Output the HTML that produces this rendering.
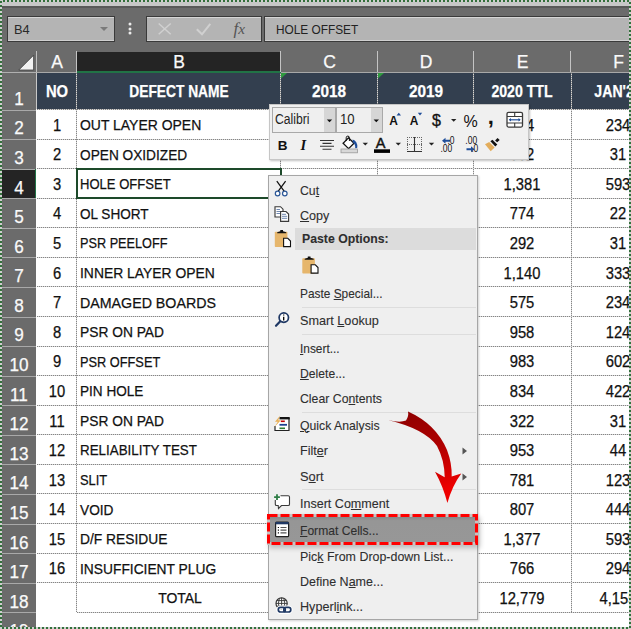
<!DOCTYPE html>
<html><head><meta charset="utf-8"><style>
html,body{margin:0;padding:0;width:631px;height:629px;overflow:hidden;background:#6b6b6b}
body{position:relative;font-family:"Liberation Sans",sans-serif}
.r{position:absolute}
.t{position:absolute;white-space:nowrap;-webkit-text-stroke:0.25px currentColor}
u{text-decoration:underline;text-underline-offset:1px;text-decoration-thickness:1px}
</style></head><body>
<div class="r" style="left:0px;top:0px;width:631px;height:629px;background:#6b6b6b"></div>
<div class="r" style="left:2px;top:2px;width:627px;height:4px;background:#c7c7c7"></div>
<div class="r" style="left:2px;top:6px;width:627px;height:2px;background:#595959"></div>
<div class="r" style="left:7px;top:16px;width:108px;height:26px;background:#b4b4b4;border:1px solid #3a3a3a;box-sizing:border-box;box-shadow:inset 0 1px 0 #d6d6d6, inset 0 -1px 0 #d0d0d0"></div>
<div class="r" style="left:146px;top:16px;width:116px;height:26px;background:#b4b4b4;border:1px solid #3a3a3a;box-sizing:border-box;box-shadow:inset 0 1px 0 #d6d6d6, inset 0 -1px 0 #d0d0d0"></div>
<div class="r" style="left:264px;top:16px;width:370px;height:26px;background:#b4b4b4;border:1px solid #3a3a3a;box-sizing:border-box;box-shadow:inset 0 1px 0 #d6d6d6, inset 0 -1px 0 #d0d0d0"></div>
<div class="t" style="left:14px;top:22.57px;font-size:13.5px;line-height:13.5px;font-weight:400;color:#2a2a2a;transform:scaleX(0.95);transform-origin:left;-webkit-text-stroke:0">B4</div>
<svg class="r" style="left:100px;top:27px" width="8" height="5"><path d="M0 0H8L4 4Z" fill="#7a7a7a"/></svg>
<svg class="r" style="left:127px;top:21.2px" width="6" height="6"><circle cx="3" cy="3" r="1.5" fill="#ececec"/></svg>
<svg class="r" style="left:127px;top:25.7px" width="6" height="6"><circle cx="3" cy="3" r="1.5" fill="#ececec"/></svg>
<svg class="r" style="left:127px;top:30.200000000000003px" width="6" height="6"><circle cx="3" cy="3" r="1.5" fill="#ececec"/></svg>
<svg class="r" style="left:155px;top:20px" width="100" height="20"><path d="M3.7 3.5L15.7 14.3M15.7 3.5L3.7 14.3" stroke="#d0d0d0" stroke-width="1.5" fill="none"/><path d="M41.8 9.2L47 14.3L55.3 3.8" stroke="#d0d0d0" stroke-width="2" fill="none"/></svg>
<div class="t" style="left:233.5px;top:20.11px;font-size:17px;line-height:17px;font-weight:400;color:#555;transform:scaleX(1.0);transform-origin:left;font-family:Liberation Serif,serif;-webkit-text-stroke:0"><i>f</i><i style="font-size:0.9em">x</i></div>
<div class="t" style="left:276.3px;top:22.50px;font-size:13.7px;line-height:13.7px;font-weight:400;color:#222;transform:scaleX(0.865);transform-origin:left;-webkit-text-stroke:0">HOLE OFFSET</div>
<div class="r" style="left:2px;top:51px;width:34px;height:21px;background:#6b6b6b"></div>
<svg class="r" style="left:17px;top:53px" width="18" height="19"><path d="M1.8 17L16.6 2.2V17Z" fill="#f2f2f2" stroke="#3d3d3d" stroke-width="0.8"/></svg>
<div class="r" style="left:36px;top:51px;width:1px;height:22px;background:#c0c0c0"></div>
<div class="r" style="left:2px;top:72px;width:35px;height:1px;background:#b0b0b0"></div>
<div class="r" style="left:37px;top:72px;width:40px;height:1px;background:#a8a8a8"></div>
<div class="r" style="left:76px;top:51px;width:1px;height:21px;background:#c4c4c4"></div>
<div class="t" style="left:57.0px;top:54.19px;font-size:17.5px;line-height:17.5px;font-weight:400;color:#fafafa;transform:translateX(-50%) scaleX(1.0);transform-origin:center;">A</div>
<div class="r" style="left:77px;top:52px;width:204px;height:19px;background:#242424"></div>
<div class="r" style="left:77px;top:71px;width:204px;height:2px;background:#217346"></div>
<div class="r" style="left:280px;top:51px;width:1px;height:21px;background:#c4c4c4"></div>
<div class="t" style="left:179.0px;top:54.19px;font-size:17.5px;line-height:17.5px;font-weight:400;color:#fafafa;transform:translateX(-50%) scaleX(1.0);transform-origin:center;">B</div>
<div class="r" style="left:281px;top:72px;width:97px;height:1px;background:#a8a8a8"></div>
<div class="r" style="left:377px;top:51px;width:1px;height:21px;background:#c4c4c4"></div>
<div class="t" style="left:329.5px;top:54.19px;font-size:17.5px;line-height:17.5px;font-weight:400;color:#fafafa;transform:translateX(-50%) scaleX(1.0);transform-origin:center;">C</div>
<div class="r" style="left:378px;top:72px;width:96px;height:1px;background:#a8a8a8"></div>
<div class="r" style="left:473px;top:51px;width:1px;height:21px;background:#c4c4c4"></div>
<div class="t" style="left:426.0px;top:54.19px;font-size:17.5px;line-height:17.5px;font-weight:400;color:#fafafa;transform:translateX(-50%) scaleX(1.0);transform-origin:center;">D</div>
<div class="r" style="left:474px;top:72px;width:97px;height:1px;background:#a8a8a8"></div>
<div class="r" style="left:570px;top:51px;width:1px;height:21px;background:#c4c4c4"></div>
<div class="t" style="left:522.5px;top:54.19px;font-size:17.5px;line-height:17.5px;font-weight:400;color:#fafafa;transform:translateX(-50%) scaleX(1.0);transform-origin:center;">E</div>
<div class="r" style="left:571px;top:72px;width:60px;height:1px;background:#a8a8a8"></div>
<div class="r" style="left:700px;top:51px;width:1px;height:21px;background:#c4c4c4"></div>
<div class="t" style="left:618.5px;top:54.19px;font-size:17.5px;line-height:17.5px;font-weight:400;color:#fafafa;transform:translateX(-50%) scaleX(1.0);transform-origin:center;">F</div>
<div class="r" style="left:76px;top:51px;width:1px;height:22px;background:#c4c4c4"></div>
<div class="r" style="left:2px;top:109.5px;width:34px;height:1.5px;background:#a9a9a9"></div>
<div class="t" style="left:19px;top:90.69px;font-size:17.5px;line-height:17.5px;font-weight:400;color:#fafafa;transform:translateX(-50%) scaleX(0.98);transform-origin:center;">1</div>
<div class="r" style="left:2px;top:138.5px;width:34px;height:1.5px;background:#a9a9a9"></div>
<div class="t" style="left:19px;top:120.46px;font-size:17.5px;line-height:17.5px;font-weight:400;color:#fafafa;transform:translateX(-50%) scaleX(0.98);transform-origin:center;">2</div>
<div class="r" style="left:2px;top:168.5px;width:34px;height:1.5px;background:#a9a9a9"></div>
<div class="t" style="left:19px;top:150.04px;font-size:17.5px;line-height:17.5px;font-weight:400;color:#fafafa;transform:translateX(-50%) scaleX(0.98);transform-origin:center;">3</div>
<div class="r" style="left:2px;top:170px;width:33px;height:28px;background:#242424"></div>
<div class="r" style="left:34.6px;top:169px;width:2px;height:29px;background:#217346"></div>
<div class="r" style="left:2px;top:197.5px;width:34px;height:1.5px;background:#a9a9a9"></div>
<div class="t" style="left:19px;top:179.61px;font-size:17.5px;line-height:17.5px;font-weight:400;color:#fafafa;transform:translateX(-50%) scaleX(0.98);transform-origin:center;">4</div>
<div class="r" style="left:2px;top:227.5px;width:34px;height:1.5px;background:#a9a9a9"></div>
<div class="t" style="left:19px;top:209.19px;font-size:17.5px;line-height:17.5px;font-weight:400;color:#fafafa;transform:translateX(-50%) scaleX(0.98);transform-origin:center;">5</div>
<div class="r" style="left:2px;top:256.5px;width:34px;height:1.5px;background:#a9a9a9"></div>
<div class="t" style="left:19px;top:238.76px;font-size:17.5px;line-height:17.5px;font-weight:400;color:#fafafa;transform:translateX(-50%) scaleX(0.98);transform-origin:center;">6</div>
<div class="r" style="left:2px;top:286.5px;width:34px;height:1.5px;background:#a9a9a9"></div>
<div class="t" style="left:19px;top:268.34px;font-size:17.5px;line-height:17.5px;font-weight:400;color:#fafafa;transform:translateX(-50%) scaleX(0.98);transform-origin:center;">7</div>
<div class="r" style="left:2px;top:316.5px;width:34px;height:1.5px;background:#a9a9a9"></div>
<div class="t" style="left:19px;top:297.91px;font-size:17.5px;line-height:17.5px;font-weight:400;color:#fafafa;transform:translateX(-50%) scaleX(0.98);transform-origin:center;">8</div>
<div class="r" style="left:2px;top:345.5px;width:34px;height:1.5px;background:#a9a9a9"></div>
<div class="t" style="left:19px;top:327.49px;font-size:17.5px;line-height:17.5px;font-weight:400;color:#fafafa;transform:translateX(-50%) scaleX(0.98);transform-origin:center;">9</div>
<div class="r" style="left:2px;top:375.5px;width:34px;height:1.5px;background:#a9a9a9"></div>
<div class="t" style="left:19px;top:357.06px;font-size:17.5px;line-height:17.5px;font-weight:400;color:#fafafa;transform:translateX(-50%) scaleX(0.98);transform-origin:center;">10</div>
<div class="r" style="left:2px;top:404.5px;width:34px;height:1.5px;background:#a9a9a9"></div>
<div class="t" style="left:19px;top:386.64px;font-size:17.5px;line-height:17.5px;font-weight:400;color:#fafafa;transform:translateX(-50%) scaleX(0.98);transform-origin:center;">11</div>
<div class="r" style="left:2px;top:434.5px;width:34px;height:1.5px;background:#a9a9a9"></div>
<div class="t" style="left:19px;top:416.21px;font-size:17.5px;line-height:17.5px;font-weight:400;color:#fafafa;transform:translateX(-50%) scaleX(0.98);transform-origin:center;">12</div>
<div class="r" style="left:2px;top:463.5px;width:34px;height:1.5px;background:#a9a9a9"></div>
<div class="t" style="left:19px;top:445.79px;font-size:17.5px;line-height:17.5px;font-weight:400;color:#fafafa;transform:translateX(-50%) scaleX(0.98);transform-origin:center;">13</div>
<div class="r" style="left:2px;top:493.5px;width:34px;height:1.5px;background:#a9a9a9"></div>
<div class="t" style="left:19px;top:475.36px;font-size:17.5px;line-height:17.5px;font-weight:400;color:#fafafa;transform:translateX(-50%) scaleX(0.98);transform-origin:center;">14</div>
<div class="r" style="left:2px;top:523.5px;width:34px;height:1.5px;background:#a9a9a9"></div>
<div class="t" style="left:19px;top:504.94px;font-size:17.5px;line-height:17.5px;font-weight:400;color:#fafafa;transform:translateX(-50%) scaleX(0.98);transform-origin:center;">15</div>
<div class="r" style="left:2px;top:552.5px;width:34px;height:1.5px;background:#a9a9a9"></div>
<div class="t" style="left:19px;top:534.51px;font-size:17.5px;line-height:17.5px;font-weight:400;color:#fafafa;transform:translateX(-50%) scaleX(0.98);transform-origin:center;">16</div>
<div class="r" style="left:2px;top:582.5px;width:34px;height:1.5px;background:#a9a9a9"></div>
<div class="t" style="left:19px;top:564.09px;font-size:17.5px;line-height:17.5px;font-weight:400;color:#fafafa;transform:translateX(-50%) scaleX(0.98);transform-origin:center;">17</div>
<div class="r" style="left:2px;top:611.5px;width:34px;height:1.5px;background:#a9a9a9"></div>
<div class="t" style="left:19px;top:593.66px;font-size:17.5px;line-height:17.5px;font-weight:400;color:#fafafa;transform:translateX(-50%) scaleX(0.98);transform-origin:center;">18</div>
<div class="r" style="left:2px;top:641.5px;width:34px;height:1.5px;background:#a9a9a9"></div>
<div class="t" style="left:19px;top:623.24px;font-size:17.5px;line-height:17.5px;font-weight:400;color:#fafafa;transform:translateX(-50%) scaleX(0.98);transform-origin:center;">19</div>
<div class="r" style="left:37px;top:73px;width:594px;height:36px;background:#333f4f"></div>
<div class="r" style="left:36px;top:109px;width:595px;height:520px;background:#ffffff"></div>
<div class="r" style="left:36px;top:73px;width:1px;height:36px;background:#c8c8c8"></div>
<div class="r" style="left:37px;top:109px;width:594px;height:1px;background:repeating-linear-gradient(90deg,#858585 0 1px,#d6d6d6 1px 2px)"></div>
<div class="r" style="left:37px;top:139px;width:594px;height:1px;background:repeating-linear-gradient(90deg,#858585 0 1px,#d6d6d6 1px 2px)"></div>
<div class="r" style="left:37px;top:168px;width:594px;height:1px;background:repeating-linear-gradient(90deg,#858585 0 1px,#d6d6d6 1px 2px)"></div>
<div class="r" style="left:37px;top:198px;width:594px;height:1px;background:repeating-linear-gradient(90deg,#858585 0 1px,#d6d6d6 1px 2px)"></div>
<div class="r" style="left:37px;top:227px;width:594px;height:1px;background:repeating-linear-gradient(90deg,#858585 0 1px,#d6d6d6 1px 2px)"></div>
<div class="r" style="left:37px;top:257px;width:594px;height:1px;background:repeating-linear-gradient(90deg,#858585 0 1px,#d6d6d6 1px 2px)"></div>
<div class="r" style="left:37px;top:286px;width:594px;height:1px;background:repeating-linear-gradient(90deg,#858585 0 1px,#d6d6d6 1px 2px)"></div>
<div class="r" style="left:37px;top:316px;width:594px;height:1px;background:repeating-linear-gradient(90deg,#858585 0 1px,#d6d6d6 1px 2px)"></div>
<div class="r" style="left:37px;top:346px;width:594px;height:1px;background:repeating-linear-gradient(90deg,#858585 0 1px,#d6d6d6 1px 2px)"></div>
<div class="r" style="left:37px;top:375px;width:594px;height:1px;background:repeating-linear-gradient(90deg,#858585 0 1px,#d6d6d6 1px 2px)"></div>
<div class="r" style="left:37px;top:405px;width:594px;height:1px;background:repeating-linear-gradient(90deg,#858585 0 1px,#d6d6d6 1px 2px)"></div>
<div class="r" style="left:37px;top:434px;width:594px;height:1px;background:repeating-linear-gradient(90deg,#858585 0 1px,#d6d6d6 1px 2px)"></div>
<div class="r" style="left:37px;top:464px;width:594px;height:1px;background:repeating-linear-gradient(90deg,#858585 0 1px,#d6d6d6 1px 2px)"></div>
<div class="r" style="left:37px;top:493px;width:594px;height:1px;background:repeating-linear-gradient(90deg,#858585 0 1px,#d6d6d6 1px 2px)"></div>
<div class="r" style="left:37px;top:523px;width:594px;height:1px;background:repeating-linear-gradient(90deg,#858585 0 1px,#d6d6d6 1px 2px)"></div>
<div class="r" style="left:37px;top:553px;width:594px;height:1px;background:repeating-linear-gradient(90deg,#858585 0 1px,#d6d6d6 1px 2px)"></div>
<div class="r" style="left:37px;top:582px;width:594px;height:1px;background:repeating-linear-gradient(90deg,#858585 0 1px,#d6d6d6 1px 2px)"></div>
<div class="r" style="left:77px;top:612px;width:554px;height:1px;background:repeating-linear-gradient(90deg,#858585 0 1px,#d6d6d6 1px 2px)"></div>
<div class="r" style="left:76px;top:73px;width:1px;height:539px;background:repeating-linear-gradient(180deg,#858585 0 1px,#d6d6d6 1px 2px)"></div>
<div class="r" style="left:280px;top:73px;width:1px;height:539px;background:repeating-linear-gradient(180deg,#858585 0 1px,#d6d6d6 1px 2px)"></div>
<div class="r" style="left:377px;top:73px;width:1px;height:539px;background:repeating-linear-gradient(180deg,#858585 0 1px,#d6d6d6 1px 2px)"></div>
<div class="r" style="left:473px;top:73px;width:1px;height:539px;background:repeating-linear-gradient(180deg,#858585 0 1px,#d6d6d6 1px 2px)"></div>
<div class="r" style="left:571px;top:73px;width:1px;height:539px;background:repeating-linear-gradient(180deg,#858585 0 1px,#d6d6d6 1px 2px)"></div>
<div class="r" style="left:76px;top:73px;width:1px;height:539px;background:repeating-linear-gradient(180deg,#858585 0 1px,#d6d6d6 1px 2px)"></div>
<div class="t" style="left:57px;top:84.11px;font-size:15.7px;line-height:15.7px;font-weight:700;color:#fff;transform:translateX(-50%) scaleX(0.942);transform-origin:center;">NO</div>
<div class="t" style="left:179px;top:84.11px;font-size:15.7px;line-height:15.7px;font-weight:700;color:#fff;transform:translateX(-50%) scaleX(0.878);transform-origin:center;">DEFECT NAME</div>
<div class="t" style="left:329.4px;top:84.11px;font-size:15.7px;line-height:15.7px;font-weight:700;color:#fff;transform:translateX(-50%) scaleX(0.979);transform-origin:center;">2018</div>
<div class="t" style="left:425.7px;top:84.11px;font-size:15.7px;line-height:15.7px;font-weight:700;color:#fff;transform:translateX(-50%) scaleX(0.979);transform-origin:center;">2019</div>
<div class="t" style="left:522px;top:84.11px;font-size:15.7px;line-height:15.7px;font-weight:700;color:#fff;transform:translateX(-50%) scaleX(0.899);transform-origin:center;">2020 TTL</div>
<div class="t" style="left:618.2px;top:84.11px;font-size:15.7px;line-height:15.7px;font-weight:700;color:#fff;transform:translateX(-50%) scaleX(0.899);transform-origin:center;">JAN'20</div>
<div class="t" style="left:57px;top:117.77px;font-size:15.6px;line-height:15.6px;font-weight:400;color:#111;transform:translateX(-50%) scaleX(0.946);transform-origin:center;">1</div>
<div class="t" style="left:80px;top:117.15px;font-size:15.5px;line-height:15.5px;font-weight:400;color:#111;transform:scaleX(0.9005);transform-origin:left;">OUT LAYER OPEN</div>
<div class="t" style="left:521.8px;top:117.77px;font-size:15.6px;line-height:15.6px;font-weight:400;color:#111;transform:translateX(-50%) scaleX(0.946);transform-origin:center;">344</div>
<div class="t" style="left:618.2px;top:117.77px;font-size:15.6px;line-height:15.6px;font-weight:400;color:#111;transform:translateX(-50%) scaleX(0.946);transform-origin:center;">234</div>
<div class="t" style="left:57px;top:147.34px;font-size:15.6px;line-height:15.6px;font-weight:400;color:#111;transform:translateX(-50%) scaleX(0.946);transform-origin:center;">2</div>
<div class="t" style="left:80px;top:146.73px;font-size:15.5px;line-height:15.5px;font-weight:400;color:#111;transform:scaleX(0.8823);transform-origin:left;">OPEN OXIDIZED</div>
<div class="t" style="left:521.8px;top:147.34px;font-size:15.6px;line-height:15.6px;font-weight:400;color:#111;transform:translateX(-50%) scaleX(0.946);transform-origin:center;">382</div>
<div class="t" style="left:618.2px;top:147.34px;font-size:15.6px;line-height:15.6px;font-weight:400;color:#111;transform:translateX(-50%) scaleX(0.946);transform-origin:center;">31</div>
<div class="t" style="left:57px;top:176.92px;font-size:15.6px;line-height:15.6px;font-weight:400;color:#111;transform:translateX(-50%) scaleX(0.946);transform-origin:center;">3</div>
<div class="t" style="left:80px;top:176.30px;font-size:15.5px;line-height:15.5px;font-weight:400;color:#111;transform:scaleX(0.8416);transform-origin:left;">HOLE OFFSET</div>
<div class="t" style="left:521.8px;top:176.92px;font-size:15.6px;line-height:15.6px;font-weight:400;color:#111;transform:translateX(-50%) scaleX(0.946);transform-origin:center;">1,381</div>
<div class="t" style="left:618.2px;top:176.92px;font-size:15.6px;line-height:15.6px;font-weight:400;color:#111;transform:translateX(-50%) scaleX(0.946);transform-origin:center;">593</div>
<div class="t" style="left:57px;top:206.49px;font-size:15.6px;line-height:15.6px;font-weight:400;color:#111;transform:translateX(-50%) scaleX(0.946);transform-origin:center;">4</div>
<div class="t" style="left:80px;top:205.88px;font-size:15.5px;line-height:15.5px;font-weight:400;color:#111;transform:scaleX(0.875);transform-origin:left;">OL SHORT</div>
<div class="t" style="left:521.8px;top:206.49px;font-size:15.6px;line-height:15.6px;font-weight:400;color:#111;transform:translateX(-50%) scaleX(0.946);transform-origin:center;">774</div>
<div class="t" style="left:618.2px;top:206.49px;font-size:15.6px;line-height:15.6px;font-weight:400;color:#111;transform:translateX(-50%) scaleX(0.946);transform-origin:center;">22</div>
<div class="t" style="left:57px;top:236.07px;font-size:15.6px;line-height:15.6px;font-weight:400;color:#111;transform:translateX(-50%) scaleX(0.946);transform-origin:center;">5</div>
<div class="t" style="left:80px;top:235.45px;font-size:15.5px;line-height:15.5px;font-weight:400;color:#111;transform:scaleX(0.8192);transform-origin:left;">PSR PEELOFF</div>
<div class="t" style="left:521.8px;top:236.07px;font-size:15.6px;line-height:15.6px;font-weight:400;color:#111;transform:translateX(-50%) scaleX(0.946);transform-origin:center;">292</div>
<div class="t" style="left:618.2px;top:236.07px;font-size:15.6px;line-height:15.6px;font-weight:400;color:#111;transform:translateX(-50%) scaleX(0.946);transform-origin:center;">31</div>
<div class="t" style="left:57px;top:265.64px;font-size:15.6px;line-height:15.6px;font-weight:400;color:#111;transform:translateX(-50%) scaleX(0.946);transform-origin:center;">6</div>
<div class="t" style="left:80px;top:265.03px;font-size:15.5px;line-height:15.5px;font-weight:400;color:#111;transform:scaleX(0.8963);transform-origin:left;">INNER LAYER OPEN</div>
<div class="t" style="left:521.8px;top:265.64px;font-size:15.6px;line-height:15.6px;font-weight:400;color:#111;transform:translateX(-50%) scaleX(0.946);transform-origin:center;">1,140</div>
<div class="t" style="left:618.2px;top:265.64px;font-size:15.6px;line-height:15.6px;font-weight:400;color:#111;transform:translateX(-50%) scaleX(0.946);transform-origin:center;">333</div>
<div class="t" style="left:57px;top:295.22px;font-size:15.6px;line-height:15.6px;font-weight:400;color:#111;transform:translateX(-50%) scaleX(0.946);transform-origin:center;">7</div>
<div class="t" style="left:80px;top:294.60px;font-size:15.5px;line-height:15.5px;font-weight:400;color:#111;transform:scaleX(0.9175);transform-origin:left;">DAMAGED BOARDS</div>
<div class="t" style="left:521.8px;top:295.22px;font-size:15.6px;line-height:15.6px;font-weight:400;color:#111;transform:translateX(-50%) scaleX(0.946);transform-origin:center;">575</div>
<div class="t" style="left:618.2px;top:295.22px;font-size:15.6px;line-height:15.6px;font-weight:400;color:#111;transform:translateX(-50%) scaleX(0.946);transform-origin:center;">234</div>
<div class="t" style="left:57px;top:324.79px;font-size:15.6px;line-height:15.6px;font-weight:400;color:#111;transform:translateX(-50%) scaleX(0.946);transform-origin:center;">8</div>
<div class="t" style="left:80px;top:324.18px;font-size:15.5px;line-height:15.5px;font-weight:400;color:#111;transform:scaleX(0.889);transform-origin:left;">PSR ON PAD</div>
<div class="t" style="left:521.8px;top:324.79px;font-size:15.6px;line-height:15.6px;font-weight:400;color:#111;transform:translateX(-50%) scaleX(0.946);transform-origin:center;">958</div>
<div class="t" style="left:618.2px;top:324.79px;font-size:15.6px;line-height:15.6px;font-weight:400;color:#111;transform:translateX(-50%) scaleX(0.946);transform-origin:center;">124</div>
<div class="t" style="left:57px;top:354.37px;font-size:15.6px;line-height:15.6px;font-weight:400;color:#111;transform:translateX(-50%) scaleX(0.946);transform-origin:center;">9</div>
<div class="t" style="left:80px;top:353.75px;font-size:15.5px;line-height:15.5px;font-weight:400;color:#111;transform:scaleX(0.8244);transform-origin:left;">PSR OFFSET</div>
<div class="t" style="left:521.8px;top:354.37px;font-size:15.6px;line-height:15.6px;font-weight:400;color:#111;transform:translateX(-50%) scaleX(0.946);transform-origin:center;">983</div>
<div class="t" style="left:618.2px;top:354.37px;font-size:15.6px;line-height:15.6px;font-weight:400;color:#111;transform:translateX(-50%) scaleX(0.946);transform-origin:center;">602</div>
<div class="t" style="left:57px;top:383.94px;font-size:15.6px;line-height:15.6px;font-weight:400;color:#111;transform:translateX(-50%) scaleX(0.946);transform-origin:center;">10</div>
<div class="t" style="left:80px;top:383.33px;font-size:15.5px;line-height:15.5px;font-weight:400;color:#111;transform:scaleX(0.8758);transform-origin:left;">PIN HOLE</div>
<div class="t" style="left:521.8px;top:383.94px;font-size:15.6px;line-height:15.6px;font-weight:400;color:#111;transform:translateX(-50%) scaleX(0.946);transform-origin:center;">834</div>
<div class="t" style="left:618.2px;top:383.94px;font-size:15.6px;line-height:15.6px;font-weight:400;color:#111;transform:translateX(-50%) scaleX(0.946);transform-origin:center;">422</div>
<div class="t" style="left:57px;top:413.52px;font-size:15.6px;line-height:15.6px;font-weight:400;color:#111;transform:translateX(-50%) scaleX(0.946);transform-origin:center;">11</div>
<div class="t" style="left:80px;top:412.90px;font-size:15.5px;line-height:15.5px;font-weight:400;color:#111;transform:scaleX(0.889);transform-origin:left;">PSR ON PAD</div>
<div class="t" style="left:521.8px;top:413.52px;font-size:15.6px;line-height:15.6px;font-weight:400;color:#111;transform:translateX(-50%) scaleX(0.946);transform-origin:center;">322</div>
<div class="t" style="left:618.2px;top:413.52px;font-size:15.6px;line-height:15.6px;font-weight:400;color:#111;transform:translateX(-50%) scaleX(0.946);transform-origin:center;">31</div>
<div class="t" style="left:57px;top:443.09px;font-size:15.6px;line-height:15.6px;font-weight:400;color:#111;transform:translateX(-50%) scaleX(0.946);transform-origin:center;">12</div>
<div class="t" style="left:80px;top:442.48px;font-size:15.5px;line-height:15.5px;font-weight:400;color:#111;transform:scaleX(0.8626);transform-origin:left;">RELIABILITY TEST</div>
<div class="t" style="left:521.8px;top:443.09px;font-size:15.6px;line-height:15.6px;font-weight:400;color:#111;transform:translateX(-50%) scaleX(0.946);transform-origin:center;">953</div>
<div class="t" style="left:618.2px;top:443.09px;font-size:15.6px;line-height:15.6px;font-weight:400;color:#111;transform:translateX(-50%) scaleX(0.946);transform-origin:center;">44</div>
<div class="t" style="left:57px;top:472.67px;font-size:15.6px;line-height:15.6px;font-weight:400;color:#111;transform:translateX(-50%) scaleX(0.946);transform-origin:center;">13</div>
<div class="t" style="left:80px;top:472.05px;font-size:15.5px;line-height:15.5px;font-weight:400;color:#111;transform:scaleX(0.8323);transform-origin:left;">SLIT</div>
<div class="t" style="left:521.8px;top:472.67px;font-size:15.6px;line-height:15.6px;font-weight:400;color:#111;transform:translateX(-50%) scaleX(0.946);transform-origin:center;">781</div>
<div class="t" style="left:618.2px;top:472.67px;font-size:15.6px;line-height:15.6px;font-weight:400;color:#111;transform:translateX(-50%) scaleX(0.946);transform-origin:center;">123</div>
<div class="t" style="left:57px;top:502.24px;font-size:15.6px;line-height:15.6px;font-weight:400;color:#111;transform:translateX(-50%) scaleX(0.946);transform-origin:center;">14</div>
<div class="t" style="left:80px;top:501.63px;font-size:15.5px;line-height:15.5px;font-weight:400;color:#111;transform:scaleX(0.8839);transform-origin:left;">VOID</div>
<div class="t" style="left:521.8px;top:502.24px;font-size:15.6px;line-height:15.6px;font-weight:400;color:#111;transform:translateX(-50%) scaleX(0.946);transform-origin:center;">807</div>
<div class="t" style="left:618.2px;top:502.24px;font-size:15.6px;line-height:15.6px;font-weight:400;color:#111;transform:translateX(-50%) scaleX(0.946);transform-origin:center;">444</div>
<div class="t" style="left:57px;top:531.82px;font-size:15.6px;line-height:15.6px;font-weight:400;color:#111;transform:translateX(-50%) scaleX(0.946);transform-origin:center;">15</div>
<div class="t" style="left:80px;top:531.20px;font-size:15.5px;line-height:15.5px;font-weight:400;color:#111;transform:scaleX(0.8905);transform-origin:left;">D/F RESIDUE</div>
<div class="t" style="left:521.8px;top:531.82px;font-size:15.6px;line-height:15.6px;font-weight:400;color:#111;transform:translateX(-50%) scaleX(0.946);transform-origin:center;">1,377</div>
<div class="t" style="left:618.2px;top:531.82px;font-size:15.6px;line-height:15.6px;font-weight:400;color:#111;transform:translateX(-50%) scaleX(0.946);transform-origin:center;">593</div>
<div class="t" style="left:57px;top:561.39px;font-size:15.6px;line-height:15.6px;font-weight:400;color:#111;transform:translateX(-50%) scaleX(0.946);transform-origin:center;">16</div>
<div class="t" style="left:80px;top:560.78px;font-size:15.5px;line-height:15.5px;font-weight:400;color:#111;transform:scaleX(0.8898);transform-origin:left;">INSUFFICIENT PLUG</div>
<div class="t" style="left:521.8px;top:561.39px;font-size:15.6px;line-height:15.6px;font-weight:400;color:#111;transform:translateX(-50%) scaleX(0.946);transform-origin:center;">766</div>
<div class="t" style="left:618.2px;top:561.39px;font-size:15.6px;line-height:15.6px;font-weight:400;color:#111;transform:translateX(-50%) scaleX(0.946);transform-origin:center;">294</div>
<div class="t" style="left:179.7px;top:590.35px;font-size:15.5px;line-height:15.5px;font-weight:400;color:#111;transform:translateX(-50%) scaleX(0.9);transform-origin:center;">TOTAL</div>
<div class="t" style="left:521.8px;top:590.97px;font-size:15.6px;line-height:15.6px;font-weight:400;color:#111;transform:translateX(-50%) scaleX(0.946);transform-origin:center;">12,779</div>
<div class="t" style="left:618.2px;top:590.97px;font-size:15.6px;line-height:15.6px;font-weight:400;color:#111;transform:translateX(-50%) scaleX(0.946);transform-origin:center;">4,155</div>
<svg class="r" style="left:281px;top:73px" width="7" height="6"><path d="M0 0H6L0 5.5Z" fill="#2f9a3f"/></svg>
<svg class="r" style="left:378px;top:73px" width="7" height="6"><path d="M0 0H6L0 5.5Z" fill="#2f9a3f"/></svg>
<div class="r" style="left:76px;top:168px;width:206px;height:31px;border:2px solid #1d4a2a;box-sizing:border-box"></div>
<div class="r" style="left:268.5px;top:104px;width:260px;height:55.5px;background:#f0f0f0;border:1px solid #c6c6c6;box-sizing:border-box;box-shadow:1px 1px 2px rgba(0,0,0,0.25)"></div>
<div class="r" style="left:268px;top:175px;width:210px;height:444.5px;background:#efefef;border:1px solid #a6a6a6;box-sizing:border-box;box-shadow:1px 1px 2px rgba(0,0,0,0.18)"></div>
<div class="r" style="left:295px;top:227.5px;width:181px;height:22.5px;background:#dcdcdc"></div>
<div class="r" style="left:302px;top:306.5px;width:174px;height:1px;background:#dddddd"></div>
<div class="r" style="left:302px;top:333.5px;width:174px;height:1px;background:#dddddd"></div>
<div class="r" style="left:302px;top:411.5px;width:174px;height:1px;background:#dddddd"></div>
<div class="r" style="left:302px;top:489px;width:174px;height:1px;background:#dddddd"></div>
<div class="r" style="left:267px;top:514px;width:211px;height:31px;background:#c4c4c4;box-shadow:2px 3px 5px rgba(0,0,0,0.22)"></div>
<div class="r" style="left:270px;top:517px;width:205px;height:25px;background:linear-gradient(#888,#969696 15%,#979797)"></div>
<svg class="r" style="left:266px;top:513px" width="214" height="34"><rect x="2.5" y="2.5" width="208" height="28" fill="none" stroke="#ff0000" stroke-width="3" stroke-dasharray="9 3"/></svg>
<div class="t" style="left:300px;top:184.78px;font-size:12.9px;line-height:12.9px;font-weight:400;color:#2e2e2e;transform:scaleX(0.9506);transform-origin:left;-webkit-text-stroke:0.1px currentColor">Cu<u>t</u></div>
<div class="t" style="left:300px;top:210.38px;font-size:12.9px;line-height:12.9px;font-weight:400;color:#2e2e2e;transform:scaleX(0.9765);transform-origin:left;-webkit-text-stroke:0.1px currentColor"><u>C</u>opy</div>
<div class="t" style="left:302px;top:232.78px;font-size:12.9px;line-height:12.9px;font-weight:700;color:#2e2e2e;transform:scaleX(0.9513);transform-origin:left;-webkit-text-stroke:0.1px currentColor">Paste Options:</div>
<div class="t" style="left:300px;top:288.18px;font-size:12.9px;line-height:12.9px;font-weight:400;color:#2e2e2e;transform:scaleX(0.9213);transform-origin:left;-webkit-text-stroke:0.1px currentColor">Paste <u>S</u>pecial...</div>
<div class="t" style="left:300px;top:314.78px;font-size:12.9px;line-height:12.9px;font-weight:400;color:#2e2e2e;transform:scaleX(0.9824);transform-origin:left;-webkit-text-stroke:0.1px currentColor">Smart <u>L</u>ookup</div>
<div class="t" style="left:300px;top:342.58px;font-size:12.9px;line-height:12.9px;font-weight:400;color:#2e2e2e;transform:scaleX(0.9202);transform-origin:left;-webkit-text-stroke:0.1px currentColor"><u>I</u>nsert...</div>
<div class="t" style="left:300px;top:367.98px;font-size:12.9px;line-height:12.9px;font-weight:400;color:#2e2e2e;transform:scaleX(0.9435);transform-origin:left;-webkit-text-stroke:0.1px currentColor"><u>D</u>elete...</div>
<div class="t" style="left:300px;top:393.08px;font-size:12.9px;line-height:12.9px;font-weight:400;color:#2e2e2e;transform:scaleX(0.9528);transform-origin:left;-webkit-text-stroke:0.1px currentColor">Clear Co<u>n</u>tents</div>
<div class="t" style="left:300px;top:419.78px;font-size:12.9px;line-height:12.9px;font-weight:400;color:#2e2e2e;transform:scaleX(0.9494);transform-origin:left;-webkit-text-stroke:0.1px currentColor"><u>Q</u>uick Analysis</div>
<div class="t" style="left:300px;top:445.38px;font-size:12.9px;line-height:12.9px;font-weight:400;color:#2e2e2e;transform:scaleX(0.9746);transform-origin:left;-webkit-text-stroke:0.1px currentColor">Filt<u>e</u>r</div>
<div class="t" style="left:300px;top:471.18px;font-size:12.9px;line-height:12.9px;font-weight:400;color:#2e2e2e;transform:scaleX(0.9974);transform-origin:left;-webkit-text-stroke:0.1px currentColor">S<u>o</u>rt</div>
<div class="t" style="left:300px;top:497.98px;font-size:12.9px;line-height:12.9px;font-weight:400;color:#2e2e2e;transform:scaleX(0.9724);transform-origin:left;-webkit-text-stroke:0.1px currentColor">Insert Co<u>m</u>ment</div>
<div class="t" style="left:300px;top:525.28px;font-size:12.9px;line-height:12.9px;font-weight:400;color:#2e2e2e;transform:scaleX(0.9386);transform-origin:left;-webkit-text-stroke:0.1px currentColor"><u>F</u>ormat Cells...</div>
<div class="t" style="left:300px;top:550.58px;font-size:12.9px;line-height:12.9px;font-weight:400;color:#2e2e2e;transform:scaleX(0.9643);transform-origin:left;-webkit-text-stroke:0.1px currentColor">Pic<u>k</u> From Drop-down List...</div>
<div class="t" style="left:300px;top:576.18px;font-size:12.9px;line-height:12.9px;font-weight:400;color:#2e2e2e;transform:scaleX(0.9698);transform-origin:left;-webkit-text-stroke:0.1px currentColor">Define N<u>a</u>me...</div>
<div class="t" style="left:300px;top:601.18px;font-size:12.9px;line-height:12.9px;font-weight:400;color:#2e2e2e;transform:scaleX(0.9786);transform-origin:left;-webkit-text-stroke:0.1px currentColor">Hyperl<u>i</u>nk...</div>
<svg class="r" style="left:462px;top:447px" width="6" height="8"><path d="M0.5 0.5L5 4L0.5 7.5Z" fill="#555"/></svg>
<svg class="r" style="left:462px;top:472.5px" width="6" height="8"><path d="M0.5 0.5L5 4L0.5 7.5Z" fill="#555"/></svg>
<div class="r" style="left:272px;top:107px;width:64px;height:25.5px;background:#efefef;border:1px solid #a9a9a9;box-sizing:border-box"></div>
<div class="r" style="left:324px;top:108px;width:11px;height:23.5px;background:#d6d6d6"></div>
<div class="r" style="left:336px;top:107px;width:47px;height:25.5px;background:#efefef;border:1px solid #a9a9a9;box-sizing:border-box"></div>
<div class="r" style="left:370.5px;top:108px;width:11.5px;height:23.5px;background:#d6d6d6"></div>
<div class="t" style="left:274.5px;top:112.15px;font-size:14px;line-height:14px;font-weight:400;color:#1f1f1f;transform:scaleX(0.87);transform-origin:left;-webkit-text-stroke:0">Calibri</div>
<div class="t" style="left:340px;top:112.15px;font-size:14px;line-height:14px;font-weight:400;color:#1f1f1f;transform:scaleX(0.94);transform-origin:left;-webkit-text-stroke:0">10</div>
<svg class="r" style="left:0;top:0" width="631" height="629"><path d="M326.8 119.5H332.2L329.5 122.3Z" fill="#111"/><path d="M373.6 119.5H379.0L376.3 122.3Z" fill="#111"/><path d="M451.0 119H456.4L453.7 121.8Z" fill="#222"/><path d="M362.6 142.8H368.0L365.3 145.60000000000002Z" fill="#222"/><path d="M395.6 142.8H401.0L398.3 145.60000000000002Z" fill="#222"/><path d="M428.8 142.8H434.2L431.5 145.60000000000002Z" fill="#222"/><text x="389.2" y="125.5" font-family="Liberation Sans" font-weight="700" font-size="13" fill="#111" transform="translate(389.2 0) scale(0.92 1) translate(-389.2 0)">A</text><text x="409.8" y="125.5" font-family="Liberation Sans" font-weight="700" font-size="13" fill="#111" transform="translate(409.8 0) scale(0.92 1) translate(-409.8 0)">A</text><path d="M396.5 115.5L398.8 112.8L401 115.5Z" fill="#1f4e9a"/><path d="M417.8 112.8H422.2L420 115.5Z" fill="#1f4e9a"/><text x="432" y="126" font-family="Liberation Sans" font-size="16" fill="#111" stroke="#111" stroke-width="0.35">$</text><text x="463.5" y="126.5" font-family="Liberation Sans" font-size="16" fill="#111" transform="translate(463.5 0) scale(1.0 1) translate(-463.5 0)">%</text><text x="487.8" y="123.5" font-family="Liberation Sans" font-weight="700" font-size="22" fill="#111">,</text><rect x="507" y="112.3" width="15.5" height="14.8" rx="1.5" fill="#fff" stroke="#3a3a3a" stroke-width="1.3"/><path d="M507 116.5H522.5M507 123H522.5M514.7 112.3V116.5M514.7 123V127" stroke="#3a3a3a" stroke-width="1.1"/><path d="M509.5 119.8H520" stroke="#1f4e9a" stroke-width="1.2"/><path d="M508.8 119.8L511 118V121.6Z M520.7 119.8L518.5 118V121.6Z" fill="#1f4e9a"/><text x="277.8" y="149.5" font-family="Liberation Sans" font-weight="700" font-size="13.5" fill="#111">B</text><text x="300.5" y="149.5" font-family="Liberation Serif" font-weight="700" font-style="italic" font-size="14.5" fill="#111">I</text><path d="M320 140.5H334M322.5 143.4H331.5M320 146.3H334M322.5 149.2H331.5" stroke="#333" stroke-width="1.1"/><path d="M348.5 137.8L354 143.3L348.6 148.7L343.1 143.3Z" fill="#fff" stroke="#111" stroke-width="1.3"/><path d="M346.2 141V137.7A1.6 1.6 0 0 1 349.4 137.7V141" fill="none" stroke="#111" stroke-width="1"/><path d="M352.6 139.6Q357.6 141 357.3 147.6Q356.6 148.6 355.2 148Q355.6 144.2 352.8 142.6Z" fill="#1f4e9a"/><rect x="341" y="149" width="16.5" height="3.8" fill="#d8d8d8" stroke="#9a9a9a" stroke-width="0.8"/><text x="375.8" y="148" font-family="Liberation Sans" font-size="14.5" fill="#111" stroke="#111" stroke-width="0.45">A</text><rect x="374" y="149.3" width="16" height="3.6" fill="#000"/><path d="M407 137.5H422M407.5 137V151M421.5 137V151M407 144.5H422" stroke="#666" stroke-width="1" stroke-dasharray="1 1" fill="none"/><path d="M414.5 137V151M407 151.5H422" stroke="#333" stroke-width="1.1"/><path d="M442 140.8L445.5 137.8V139.8H450V141.8H445.5V143.8Z" fill="#1f4e9a"/><text x="447.5" y="144" font-family="Liberation Sans" font-weight="400" font-size="10" fill="#111" transform="translate(447.5 0) scale(0.85 1) translate(-447.5 0)">.0</text><text x="440.5" y="152.5" font-family="Liberation Sans" font-weight="400" font-size="10" fill="#111" transform="translate(440.5 0) scale(0.85 1) translate(-440.5 0)">.00</text><text x="465.3" y="144" font-family="Liberation Sans" font-weight="400" font-size="10" fill="#111" transform="translate(465.3 0) scale(0.85 1) translate(-465.3 0)">.00</text><path d="M474.5 149.3L471 146.3V148.3H466.5V150.3H471V152.3Z" fill="#1f4e9a"/><text x="471.2" y="152.5" font-family="Liberation Sans" font-weight="400" font-size="10" fill="#111" transform="translate(471.2 0) scale(0.85 1) translate(-471.2 0)">.0</text><path d="M485 144.3L489.2 141.9L494.6 147.6L490.7 151.2Z" fill="#e3ad5c"/><path d="M490.4 141.3L492.4 139.8L497.3 144.6L495.3 146.4Z" fill="#111"/><path d="M495.1 140.4L497.5 137.9L499.7 139.9L497.2 142.2Z" fill="#111"/><path d="M276.8 181.2L284.3 191.3M285.6 181.2L278.1 191.3" stroke="#111" stroke-width="1.25" fill="none"/><circle cx="277.6" cy="193.5" r="2.3" fill="#fff" stroke="#2b5797" stroke-width="1.2"/><circle cx="284.8" cy="193.5" r="2.3" fill="#fff" stroke="#2b5797" stroke-width="1.2"/><path d="M275 206.7H280.5L283 209.2V217H275Z" fill="#fff" stroke="#3a3a3a" stroke-width="1.15"/><path d="M276.5 209.5H280M276.5 211.5H281.5M276.5 213.5H281.5" stroke="#7088b0" stroke-width="1"/><path d="M280.6 211.5H286L288.6 214V221.3H280.6Z" fill="#fff" stroke="#3a3a3a" stroke-width="1.15"/><path d="M282 214.3H286M282 216.3H287.2M282 218.3H287.2" stroke="#7088b0" stroke-width="1"/><rect x="274.8" y="231.7" width="12.6" height="15.3" rx="0.8" fill="#e6b66c"/><path d="M277.2 233.3H286.2V232.2L283 231.2V230H280.3V231.2L277.2 232.2Z" fill="#111"/><path d="M283.6 238.3H287.8L290.5 241V246.6H283.6Z" fill="#fff" stroke="#111" stroke-width="1.1"/><rect x="302.3" y="258.2" width="12.6" height="15.3" rx="0.8" fill="#e6b66c"/><path d="M304.7 259.8H313.7V258.7L310.5 257.7V256.5H307.8V257.7L304.7 258.7Z" fill="#111"/><path d="M311.1 264.8H315.3L318.0 267.5V273.1H311.1Z" fill="#fff" stroke="#111" stroke-width="1.1"/><circle cx="283.8" cy="317.6" r="4.7" fill="#fff" stroke="#1f3864" stroke-width="1.7"/><path d="M280.3 321.3L276 325.8" stroke="#1f3864" stroke-width="2.2" stroke-linecap="round"/><path d="M283.7 314.6V315.6M283.7 316.8V320.6" stroke="#000" stroke-width="1.3"/><path d="M280 418.5H289V430.5H275V426" fill="#fff" stroke="#222" stroke-width="1.2"/><rect x="279.5" y="417" width="10.2" height="2.4" fill="#111"/><path d="M280.8 421.3H284.8" stroke="#c00000" stroke-width="1.6"/><path d="M279.5 424.8H287" stroke="#1f3f8f" stroke-width="1.8"/><path d="M279.5 428.3H285" stroke="#2e7d32" stroke-width="1.6"/><path d="M280.2 415.5L275 421.8H277.8L274.3 427.3L280.8 420.3H278.2Z" fill="#eab055"/><path d="M280.5 495.8H288.2Q289.5 495.8 289.5 497.1V504.2Q289.5 505.5 288.2 505.5H281.5L278.5 508.5L278.2 505.5H276.6Q275.3 505.5 275.3 504.2V500" fill="#fff" stroke="#3a3a3a" stroke-width="1.1"/><path d="M277 494.2V500M274.1 497.1H279.9" stroke="#2e7d46" stroke-width="1.8"/><rect x="275.6" y="522.2" width="13" height="14.5" rx="1" fill="#fff" stroke="#222" stroke-width="1.2"/><rect x="275.6" y="522" width="13" height="2.3" fill="#1f3864"/><path d="M277.8 527.5H279M277.8 530.2H279M277.8 532.9H279" stroke="#111" stroke-width="1.2"/><path d="M280.5 527.5H286.5M280.5 530.2H286.5M280.5 532.9H286.5" stroke="#555" stroke-width="1.2"/><circle cx="281.6" cy="603.4" r="5.6" fill="#fff" stroke="#333" stroke-width="1.2"/><path d="M276 603.4H287.2M281.6 597.8V609M276.8 600.6H286.4M276.8 606.2H286.4M279.4 598.3Q277.4 603.4 279.4 608.5M283.8 598.3Q285.8 603.4 283.8 608.5" stroke="#333" stroke-width="0.9" fill="none"/><g fill="none" stroke="#fff" stroke-width="4"><rect x="278.3" y="607.4" width="7" height="4.6" rx="2.3"/><rect x="283.8" y="607.4" width="7" height="4.6" rx="2.3"/></g><g fill="none" stroke="#1f3864" stroke-width="1.7"><rect x="278.3" y="607.4" width="7" height="4.6" rx="2.3"/><rect x="283.8" y="607.4" width="7" height="4.6" rx="2.3"/></g></svg>
<svg class="r" style="left:0;top:0" width="631" height="629"><defs><linearGradient id="ag" x1="0" y1="0" x2="0.3" y2="1"><stop offset="0" stop-color="#8a0000"/><stop offset="0.55" stop-color="#b00000"/><stop offset="1" stop-color="#ee0000"/></linearGradient></defs><path d="M388 420 Q400 423 406 420.5 Q409 416 408 411.5 Q436 424 447 450 Q452 463 451.7 476.5 L461.3 473.4 Q452 486 447.4 503 Q443 486 435 471.7 L444.7 477.3 Q444.5 460 437 446 Q425 429 388 420 Z" fill="url(#ag)"/></svg>
<div class="r" style="left:0;top:0;width:631px;height:2px;background:repeating-linear-gradient(90deg,#33703b 0 1px,#cfcfcf 1px 3px,#33703b 3px 4px)"></div>
<div class="r" style="left:0;top:627px;width:631px;height:2px;background:repeating-linear-gradient(90deg,#cfcfcf 0 2px,#33703b 2px 4px)"></div>
<div class="r" style="left:0;top:0;width:2px;height:629px;background:repeating-linear-gradient(180deg,#cfcfcf 0 1px,#33703b 1px 3px,#cfcfcf 3px 4px)"></div>
<div class="r" style="left:629px;top:0;width:2px;height:629px;background:repeating-linear-gradient(180deg,#cfcfcf 0 2px,#33703b 2px 4px)"></div>
</body></html>
